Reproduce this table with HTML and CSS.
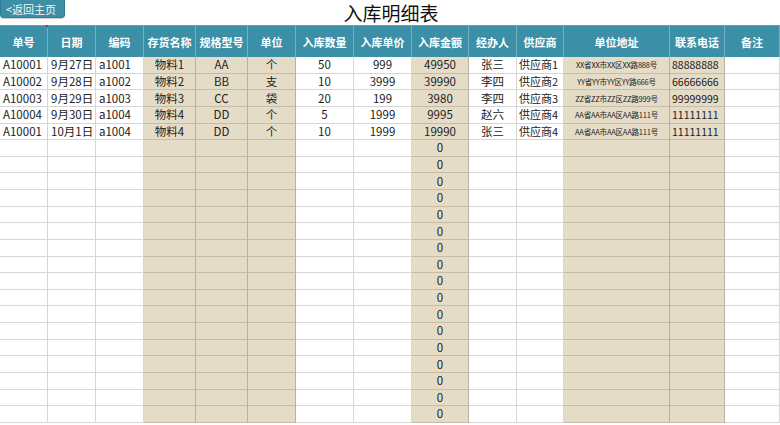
FILE: index.html
```html
<!DOCTYPE html>
<html lang="zh">
<head>
<meta charset="utf-8">
<link rel="stylesheet" href="styles.css">
</head>
<body>
<div class="top">
  <button class="back">&lt;返回主页</button>
  <h1 class="title">入库明细表</h1>
</div>
<table class="sheet">
  <colgroup>
    <col class="c1"><col class="c2"><col class="c3"><col class="c4"><col class="c5"><col class="c6"><col class="c7"><col class="c8"><col class="c9"><col class="c10"><col class="c11"><col class="c12"><col class="c13"><col class="c14">
  </colgroup>
  <thead>
    <tr>
      <th class="mark">单号</th><th>日期</th><th>编码</th><th>存货名称</th><th>规格型号</th><th>单位</th><th>入库数量</th><th>入库单价</th><th>入库金额</th><th>经办人</th><th>供应商</th><th>单位地址</th><th>联系电话</th><th>备注</th>
    </tr>
  </thead>
  <tbody>
    <tr><td class="l">A10001</td><td class="l">9月27日</td><td class="l">a1001</td><td class="t">物料1</td><td class="t">AA</td><td class="t">个</td><td>50</td><td>999</td><td class="t">49950</td><td>张三</td><td class="l s">供应商1</td><td class="t addr">XX省XX市XX区XX路888号</td><td class="t l ph">88888888</td><td></td></tr>
    <tr><td class="l">A10002</td><td class="l">9月28日</td><td class="l">a1002</td><td class="t">物料2</td><td class="t">BB</td><td class="t">支</td><td>10</td><td>3999</td><td class="t">39990</td><td>李四</td><td class="l s">供应商2</td><td class="t addr">YY省YY市YY区YY路666号</td><td class="t l ph">66666666</td><td></td></tr>
    <tr><td class="l">A10003</td><td class="l">9月29日</td><td class="l">a1003</td><td class="t">物料3</td><td class="t">CC</td><td class="t">袋</td><td>20</td><td>199</td><td class="t">3980</td><td>李四</td><td class="l s">供应商3</td><td class="t addr">ZZ省ZZ市ZZ区ZZ路999号</td><td class="t l ph">99999999</td><td></td></tr>
    <tr><td class="l">A10004</td><td class="l">9月30日</td><td class="l">a1004</td><td class="t">物料4</td><td class="t">DD</td><td class="t">个</td><td>5</td><td>1999</td><td class="t">9995</td><td>赵六</td><td class="l s">供应商4</td><td class="t addr">AA省AA市AA区AA路111号</td><td class="t l ph">11111111</td><td></td></tr>
    <tr><td class="l">A10001</td><td class="l">10月1日</td><td class="l">a1004</td><td class="t">物料4</td><td class="t">DD</td><td class="t">个</td><td>10</td><td>1999</td><td class="t">19990</td><td>张三</td><td class="l s">供应商4</td><td class="t addr">AA省AA市AA区AA路111号</td><td class="t l ph">11111111</td><td></td></tr>
    <tr><td></td><td></td><td></td><td class="t"></td><td class="t"></td><td class="t"></td><td></td><td></td><td class="t">0</td><td></td><td></td><td class="t"></td><td class="t"></td><td></td></tr>
    <tr><td></td><td></td><td></td><td class="t"></td><td class="t"></td><td class="t"></td><td></td><td></td><td class="t">0</td><td></td><td></td><td class="t"></td><td class="t"></td><td></td></tr>
    <tr><td></td><td></td><td></td><td class="t"></td><td class="t"></td><td class="t"></td><td></td><td></td><td class="t">0</td><td></td><td></td><td class="t"></td><td class="t"></td><td></td></tr>
    <tr><td></td><td></td><td></td><td class="t"></td><td class="t"></td><td class="t"></td><td></td><td></td><td class="t">0</td><td></td><td></td><td class="t"></td><td class="t"></td><td></td></tr>
    <tr><td></td><td></td><td></td><td class="t"></td><td class="t"></td><td class="t"></td><td></td><td></td><td class="t">0</td><td></td><td></td><td class="t"></td><td class="t"></td><td></td></tr>
    <tr><td></td><td></td><td></td><td class="t"></td><td class="t"></td><td class="t"></td><td></td><td></td><td class="t">0</td><td></td><td></td><td class="t"></td><td class="t"></td><td></td></tr>
    <tr><td></td><td></td><td></td><td class="t"></td><td class="t"></td><td class="t"></td><td></td><td></td><td class="t">0</td><td></td><td></td><td class="t"></td><td class="t"></td><td></td></tr>
    <tr><td></td><td></td><td></td><td class="t"></td><td class="t"></td><td class="t"></td><td></td><td></td><td class="t">0</td><td></td><td></td><td class="t"></td><td class="t"></td><td></td></tr>
    <tr><td></td><td></td><td></td><td class="t"></td><td class="t"></td><td class="t"></td><td></td><td></td><td class="t">0</td><td></td><td></td><td class="t"></td><td class="t"></td><td></td></tr>
    <tr><td></td><td></td><td></td><td class="t"></td><td class="t"></td><td class="t"></td><td></td><td></td><td class="t">0</td><td></td><td></td><td class="t"></td><td class="t"></td><td></td></tr>
    <tr><td></td><td></td><td></td><td class="t"></td><td class="t"></td><td class="t"></td><td></td><td></td><td class="t">0</td><td></td><td></td><td class="t"></td><td class="t"></td><td></td></tr>
    <tr><td></td><td></td><td></td><td class="t"></td><td class="t"></td><td class="t"></td><td></td><td></td><td class="t">0</td><td></td><td></td><td class="t"></td><td class="t"></td><td></td></tr>
    <tr><td></td><td></td><td></td><td class="t"></td><td class="t"></td><td class="t"></td><td></td><td></td><td class="t">0</td><td></td><td></td><td class="t"></td><td class="t"></td><td></td></tr>
    <tr><td></td><td></td><td></td><td class="t"></td><td class="t"></td><td class="t"></td><td></td><td></td><td class="t">0</td><td></td><td></td><td class="t"></td><td class="t"></td><td></td></tr>
    <tr><td></td><td></td><td></td><td class="t"></td><td class="t"></td><td class="t"></td><td></td><td></td><td class="t">0</td><td></td><td></td><td class="t"></td><td class="t"></td><td></td></tr>
    <tr><td></td><td></td><td></td><td class="t"></td><td class="t"></td><td class="t"></td><td></td><td></td><td class="t">0</td><td></td><td></td><td class="t"></td><td class="t"></td><td></td></tr>
    <tr><td></td><td></td><td></td><td class="t"></td><td class="t"></td><td class="t"></td><td></td><td></td><td class="t">0</td><td></td><td></td><td class="t"></td><td class="t"></td><td></td></tr>
  </tbody>
</table>
</body>
</html>
```
FILE: styles.css
```css
html, body {
  margin: 0;
  padding: 0;
  background: #ffffff;
  overflow: hidden;
}
body {
  width: 780px;
  height: 425px;
  font-family: "Noto Sans CJK SC", "Noto Sans", sans-serif;
  color: #222;
}
.top {
  position: relative;
  height: 25px;
}
.back {
  position: absolute;
  left: 0;
  top: 0;
  width: 65px;
  height: 18px;
  padding: 0 0 0 5px;
  margin: 0;
  border: 1px solid #2e7c91;
  border-top: none;
  border-radius: 0 0 4px 4px;
  background: #3b8fa6;
  color: #f2f8fa;
  font-family: "Noto Sans CJK SC", sans-serif;
  font-size: 11px;
  line-height: 16px;
  text-align: left;
  box-shadow: 0 1px 1px rgba(0,0,0,0.2);
}
.title {
  margin: 0;
  text-align: center;
  font-size: 19px;
  font-weight: normal;
  line-height: 26px;
  color: #111;
  padding-left: 2px;
}
.sheet {
  width: 780px;
  table-layout: fixed;
  border-collapse: separate;
  border-spacing: 0;
}
.c1 { width: 48px; }
.c2 { width: 48px; }
.c3 { width: 48px; }
.c4 { width: 52px; }
.c5 { width: 52px; }
.c6 { width: 48px; }
.c7 { width: 58px; }
.c8 { width: 58px; }
.c9 { width: 57px; }
.c10 { width: 48px; }
.c11 { width: 47px; }
.c12 { width: 106px; }
.c13 { width: 55px; }
.c14 { width: 55px; }
th {
  height: 32px;
  padding: 0;
  background: #3b8fa6;
  color: #fff;
  font-size: 11px;
  font-weight: bold;
  border-right: 1px solid #74b3c4;
  border-top: 1px solid #5aa2b6;
  box-sizing: border-box;
  text-align: center;
}
th.mark {
  position: relative;
}
th.mark::after {
  content: "";
  position: absolute;
  right: -1px;
  top: -1px;
  border-top: 3px solid #e02020;
  border-left: 3px solid transparent;
}
td {
  height: 16.64px;
  padding: 0;
  box-sizing: border-box;
  border-right: 1px solid #d6d6d6;
  border-bottom: 1px solid #d6d6d6;
  font-size: 11.5px;
  line-height: 15px;
  text-align: center;
  white-space: nowrap;
  overflow: hidden;
  color: #222;
}
td.l {
  text-align: left;
  padding-left: 3px;
}
td.s {
  padding-left: 2px;
  font-size: 11px;
}
td.t {
  background: #e5dcc7;
  border-right-color: #b8b0a0;
  border-bottom-color: #c6bda9;
}
td.ph {
  font-size: 10.5px;
  padding-left: 2px;
}
td.addr {
  font-size: 7.5px;
  letter-spacing: -0.2px;
}
```
